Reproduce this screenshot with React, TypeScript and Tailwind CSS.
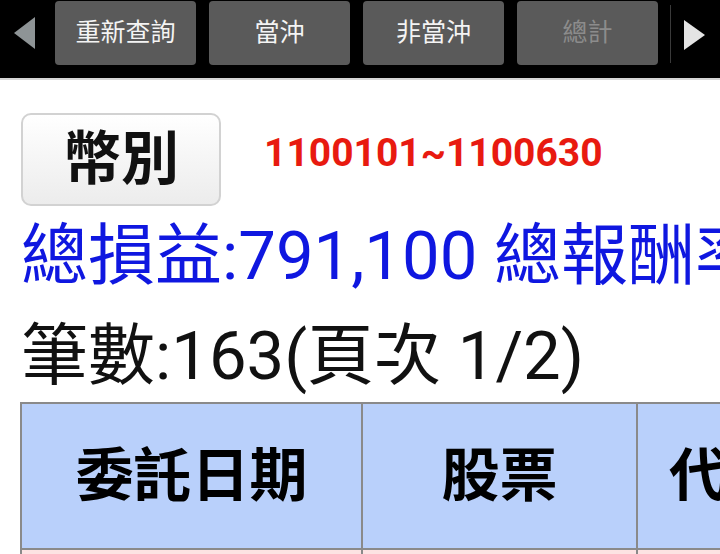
import React from "react";

const FONT = 'Roboto, "Noto Sans CJK TC", sans-serif';

function TopButton({ label, disabled }: { label: string; disabled?: boolean }) {
  return (
    <div
      className={`flex h-[64px] w-[141px] shrink-0 items-center justify-center rounded-[4px] bg-[#5a5a5a] text-[25px] ${
        disabled ? "text-[#8c8c8c]" : "text-[#f4f4f4]"
      }`}
    >
      {label}
    </div>
  );
}

export default function App() {
  return (
    <div
      className="h-[554px] w-[720px] overflow-hidden bg-white"
      style={{ fontFamily: FONT }}
    >
      {/* top toolbar */}
      <div className="flex h-[80px] items-start border-b-2 border-[#d6d6d6] bg-black">
        <div className="flex h-[66px] w-[55px] shrink-0 items-center pl-[14px]">
          <svg width="21" height="32" viewBox="0 0 21 32">
            <polygon points="21,0 0,16 21,32" fill="#8e9496" />
          </svg>
        </div>
        <div className="mt-[1px] flex gap-[13px]">
          <TopButton label="重新查詢" />
          <TopButton label="當沖" />
          <TopButton label="非當沖" />
          <TopButton label="總計" disabled />
        </div>
        <div className="ml-[12px] mt-[5px] h-[58px] w-px bg-[#3a3a3a]" />
        <div className="flex h-[70px] items-center pl-[13px]">
          <svg width="21" height="30" viewBox="0 0 21 30">
            <polygon points="0,0 21,15 0,30" fill="#e4e4e4" />
          </svg>
        </div>
      </div>

      <div className="pl-[21px]">
        {/* currency button + date range */}
        <div className="mt-[33px] flex items-center">
          <div className="flex h-[93px] w-[200px] items-center justify-center rounded-[10px] border-2 border-[#d2d2d2] bg-gradient-to-b from-white to-[#ececec] text-[58px] font-bold text-[#111]">
            幣別
          </div>
          <div className="mb-[12px] ml-[43px] text-[39px] font-bold text-[#e81a10]">
            1100101~1100630
          </div>
        </div>

        {/* totals */}
        <div className="h-[100px] whitespace-nowrap text-[67px] leading-[100px] text-[#0f17e0]">
          總損益:791,100 總報酬率:12.35%
        </div>
        <div className="h-[96px] whitespace-nowrap text-[67px] leading-[100px] text-[#111]">
          筆數:163(頁次 1/2)
        </div>
      </div>

      {/* table */}
      <div className="ml-[20px] grid w-[960px] grid-cols-[341px_275px_180px_164px] border-l-2 border-t-2 border-[#8a8a8a]">
        {["委託日期", "股票", "代號", "類別"].map((h) => (
          <div
            key={h}
            className="flex h-[146px] items-center justify-center whitespace-nowrap border-b-2 border-r-2 border-[#8a8a8a] bg-[#b9d0fb] text-[58px] font-bold text-black"
          >
            {h}
          </div>
        ))}
        {[0, 1, 2, 3].map((i) => (
          <div
            key={i}
            className="h-[60px] border-r-2 border-[#8a8a8a] bg-[#fde3e3]"
          />
        ))}
      </div>
    </div>
  );
}
